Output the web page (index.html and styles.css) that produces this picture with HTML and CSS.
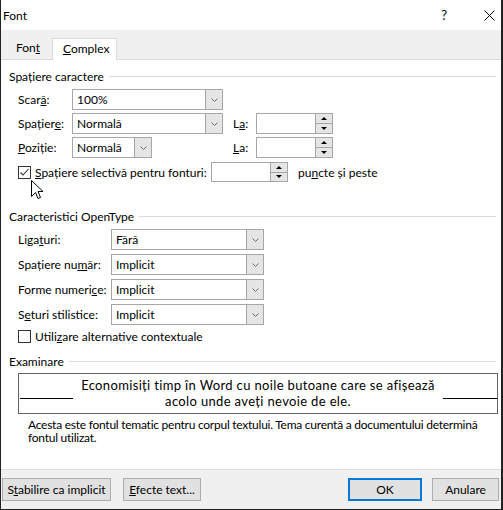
FILE: index.html
```html
<!DOCTYPE html>
<html lang="ro">
<head>
  <meta charset="UTF-8" />
  <title>Font</title>
  <link rel="stylesheet" href="styles.css">
</head>
<body>
  <div class="dialog">
    <div class="titlebar">
      <span class="title">Font</span>
      <span class="help">?</span>
      <svg class="close" width="11" height="11" viewBox="0 0 11 11"><path d="M0.5 0.5 L10.5 10.5 M10.5 0.5 L0.5 10.5" stroke="#000" stroke-width="1" fill="none"/></svg>
    </div>

    <div class="tabs">
      <div class="tab">Fon<u>t</u></div>
      <div class="tab active"><u>C</u>omplex</div>
    </div>

    <div class="content">
      <div class="group-title">Spațiere caractere</div>

      <div class="row first">
        <span class="lbl lbl-a">Scar<u>ă</u>:</span>
        <div class="select sel-a"><span class="val">100%</span><span class="arrow"><svg width="7" height="4" viewBox="0 0 7 4"><path d="M0.5 0.5 L3.5 3.5 L6.5 0.5" stroke="#6b6b6b" fill="none"/></svg></span></div>
      </div>

      <div class="row">
        <span class="lbl lbl-a">Spațier<u>e</u>:</span>
        <div class="select sel-a"><span class="val">Normală</span><span class="arrow"><svg width="7" height="4" viewBox="0 0 7 4"><path d="M0.5 0.5 L3.5 3.5 L6.5 0.5" stroke="#6b6b6b" fill="none"/></svg></span></div>
        <span class="la">L<u>a</u>:</span>
        <div class="spin"><span class="spin-val"></span><span class="spin-btns"><span class="up"></span><span class="down"></span></span></div>
      </div>

      <div class="row">
        <span class="lbl lbl-a"><u>P</u>oziție:</span>
        <div class="select sel-short"><span class="val">Normală</span><span class="arrow"><svg width="7" height="4" viewBox="0 0 7 4"><path d="M0.5 0.5 L3.5 3.5 L6.5 0.5" stroke="#6b6b6b" fill="none"/></svg></span></div>
        <span class="la la-far"><u>L</u>a:</span>
        <div class="spin"><span class="spin-val"></span><span class="spin-btns"><span class="up"></span><span class="down"></span></span></div>
      </div>

      <div class="row check-row">
        <span class="checkbox"><svg width="11" height="11" viewBox="0 0 11 11"><path d="M1.5 5.5 L4 8 L9.5 2" stroke="#333" stroke-width="1.1" fill="none"/></svg></span>
        <span class="check-lbl"><u>S</u>pațiere selectivă pentru fonturi:</span>
        <div class="spin spin-small"><span class="spin-val"></span><span class="spin-btns"><span class="up"></span><span class="down"></span></span></div>
        <span class="after">pu<u>n</u>cte și peste</span>
      </div>

      <div class="group-title second">Caracteristici OpenType</div>

      <div class="row first">
        <span class="lbl lbl-b">Liga<u>t</u>uri:</span>
        <div class="select sel-b"><span class="val">Fără</span><span class="arrow"><svg width="7" height="4" viewBox="0 0 7 4"><path d="M0.5 0.5 L3.5 3.5 L6.5 0.5" stroke="#6b6b6b" fill="none"/></svg></span></div>
      </div>
      <div class="row gap4">
        <span class="lbl lbl-b">Spațiere nu<u>m</u>ăr:</span>
        <div class="select sel-b"><span class="val">Implicit</span><span class="arrow"><svg width="7" height="4" viewBox="0 0 7 4"><path d="M0.5 0.5 L3.5 3.5 L6.5 0.5" stroke="#6b6b6b" fill="none"/></svg></span></div>
      </div>
      <div class="row gap4">
        <span class="lbl lbl-b">Forme numeri<u>c</u>e:</span>
        <div class="select sel-b"><span class="val">Implicit</span><span class="arrow"><svg width="7" height="4" viewBox="0 0 7 4"><path d="M0.5 0.5 L3.5 3.5 L6.5 0.5" stroke="#6b6b6b" fill="none"/></svg></span></div>
      </div>
      <div class="row gap4">
        <span class="lbl lbl-b">S<u>e</u>turi stilistice:</span>
        <div class="select sel-b"><span class="val">Implicit</span><span class="arrow"><svg width="7" height="4" viewBox="0 0 7 4"><path d="M0.5 0.5 L3.5 3.5 L6.5 0.5" stroke="#6b6b6b" fill="none"/></svg></span></div>
      </div>

      <div class="row check-row2">
        <span class="checkbox"></span>
        <span class="check-lbl2">Utili<u>z</u>are alternative contextuale</span>
      </div>

      <div class="group-title third">Examinare</div>

      <div class="preview">
        <span class="base-line left"></span>
        <div class="preview-text">Economisiți timp în Word cu noile butoane care se afișează<br>acolo unde aveți nevoie de ele.</div>
        <span class="base-line right"></span>
      </div>

      <p class="desc">Acesta este fontul tematic pentru corpul textului. Tema curentă a documentului determină fontul utilizat.</p>
    </div>

    <div class="footer">
      <button class="btn btn-default">S<u>t</u>abilire ca implicit</button>
      <button class="btn btn-effects"><u>E</u>fecte text...</button>
      <button class="btn btn-ok">OK</button>
      <button class="btn btn-cancel">Anulare</button>
    </div>

    <svg class="cursor" width="13" height="20" viewBox="0 0 13 20"><path d="M0.5 0.5 L0.5 16.5 L4.5 12.5 L7 18.5 L9.5 17.5 L7 11.5 L12 11.5 Z" fill="#fff" stroke="#000" stroke-width="1"/></svg>
  </div>
</body>
</html>
```

FILE: styles.css
```css
body {
  margin: 0;
  font-family: Lato, "Noto Sans", sans-serif;
  font-size: 12px;
  color: #000;
  background: #fff;
}

.dialog {
  width: 503px;
  height: 510px;
  box-sizing: border-box;
  border-left: 1px solid #222;
  border-right: 2px solid #222;
  border-bottom: 1px solid #222;
  display: flex;
  flex-direction: column;
  position: relative;
}

/* title bar */
.titlebar {
  height: 30px;
  display: flex;
  align-items: center;
  flex-shrink: 0;
}

.title {
  padding-left: 2px;
  font-size: 12px;
}

.help {
  margin-left: auto;
  margin-right: 37px;
  font-size: 13px;
}

.close {
  margin-right: 6px;
}

/* tabs */
.tabs {
  height: 30px;
  box-sizing: border-box;
  background: #f0f0f0;
  border-bottom: 1px solid #d9d9d9;
  display: flex;
  align-items: flex-end;
  flex-shrink: 0;
}

.tab {
  width: 51px;
  height: 20px;
  line-height: 18px;
  padding-left: 15px;
  box-sizing: border-box;
}

.tab.active {
  width: 65px;
  height: 22px;
  line-height: 20px;
  padding-left: 10px;
  background: #fff;
  border: 1px solid #d9d9d9;
  border-bottom: none;
  margin-bottom: -1px;
}

/* content */
.content {
  flex: 1;
  padding: 0 5px 0 8px;
  background: #fff;
}

.group-title {
  display: flex;
  align-items: center;
  height: 16px;
  margin-top: 8px;
}

.group-title::after {
  content: "";
  flex: 1;
  height: 1px;
  background: #dcdcdc;
  margin-left: 5px;
}

.group-title.second {
  margin-top: 26px;
}

.group-title.third {
  margin-top: 9px;
}

.row {
  display: flex;
  align-items: center;
  margin-left: 9px;
  margin-top: 3px;
}

.row.first {
  margin-top: 5px;
}

.row.gap4 {
  margin-top: 4px;
}

.lbl-a {
  width: 54px;
}

.lbl-b {
  width: 93px;
}

.select {
  height: 21px;
  box-sizing: border-box;
  border: 1px solid #a6a6a6;
  display: flex;
  background: #fff;
}

.select .val {
  flex: 1;
  padding-left: 4px;
  line-height: 19px;
}

.select .arrow {
  width: 16px;
  background: #e5e5e5;
  border-left: 1px solid #a6a6a6;
  display: flex;
  align-items: center;
  justify-content: center;
}

.sel-a {
  width: 151px;
}

.sel-short {
  width: 80px;
}

.sel-b {
  width: 153px;
}

.la {
  margin-left: 10px;
  width: 23px;
}

.la-far {
  margin-left: 81px;
}

.spin {
  width: 77px;
  height: 21px;
  box-sizing: border-box;
  border: 1px solid #a6a6a6;
  display: flex;
  background: #fff;
}

.spin-val {
  flex: 1;
}

.spin-btns {
  width: 16px;
  border-left: 1px solid #a6a6a6;
  display: flex;
  flex-direction: column;
}

.spin-btns span {
  flex: 1;
  background: #e5e5e5;
  display: flex;
  align-items: center;
  justify-content: center;
}

.spin-btns .up {
  border-bottom: 1px solid #a6a6a6;
}

.spin-btns .up::after {
  content: "";
  border-left: 3px solid transparent;
  border-right: 3px solid transparent;
  border-bottom: 3px solid #000;
}

.spin-btns .down::after {
  content: "";
  border-left: 3px solid transparent;
  border-right: 3px solid transparent;
  border-top: 3px solid #000;
}

.check-row {
  margin-top: 4px;
}

.spin-small {
  height: 20px;
}

.checkbox {
  width: 13px;
  height: 13px;
  box-sizing: border-box;
  border: 1px solid #333;
  background: #fff;
  display: flex;
  align-items: center;
  justify-content: center;
}

.check-lbl {
  width: 180px;
  padding-left: 4px;
  box-sizing: border-box;
  margin-left: 0;
}

.after {
  margin-left: 10px;
}

.check-row2 {
  margin-top: 4px;
}

.check-lbl2 {
  padding-left: 4px;
}

/* preview */
.preview {
  margin: 4px 0 0 9px;
  width: 480px;
  height: 41px;
  box-sizing: border-box;
  border: 1px solid #646464;
  display: flex;
}

.base-line {
  height: 1px;
  background: #000;
  margin-top: 24px;
}

.base-line.left {
  width: 53px;
  margin-left: 1px;
}

.base-line.right {
  width: 54px;
}

.preview-text {
  flex: 1;
  text-align: center;
  font-family: Lato, "Noto Sans", sans-serif;
  font-size: 13px;
  letter-spacing: 0.35px;
  line-height: 15.6px;
  padding-top: 4px;
}

.desc {
  margin: 4px 0 0 19px;
  line-height: 13px;
  letter-spacing: -0.25px;
}

/* footer */
.footer {
  height: 40px;
  box-sizing: border-box;
  border-top: 1px solid #dfdfdf;
  background: #f0f0f0;
  display: flex;
  align-items: flex-start;
  padding: 8px 2px 0 1px;
  flex-shrink: 0;
}

.btn {
  height: 23px;
  box-sizing: border-box;
  border: 1px solid #adadad;
  background: #e1e1e1;
  font-family: Lato, "Noto Sans", sans-serif;
  font-size: 12px;
  color: #000;
  padding: 0;
}

.btn-default {
  width: 109px;
}

.btn-effects {
  width: 78px;
  margin-left: 12px;
}

.btn-ok {
  width: 74px;
  margin-left: auto;
  border: 2px solid #0078d7;
}

.btn-cancel {
  width: 67px;
  margin-left: 10px;
}

/* mouse pointer over the checkbox */
.cursor {
  position: absolute;
  left: 30px;
  top: 180px;
}
```
